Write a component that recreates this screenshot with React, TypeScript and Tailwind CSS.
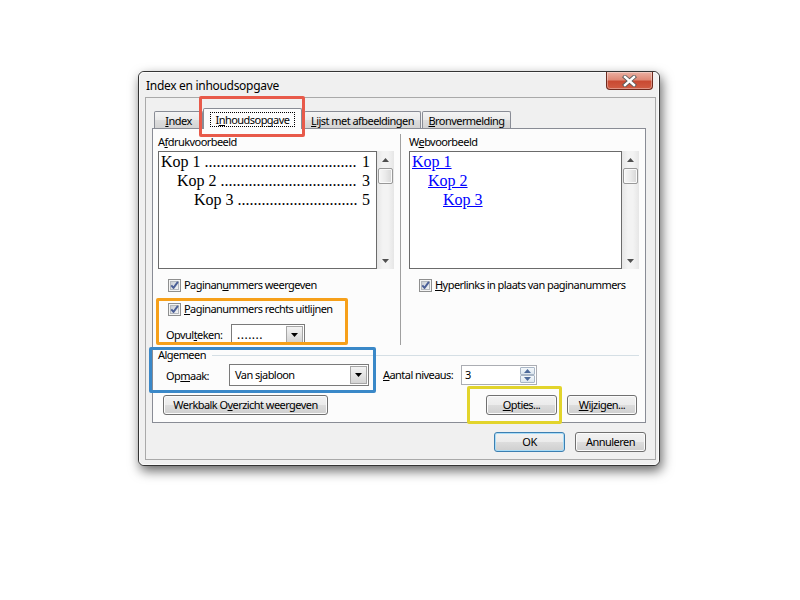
import React from "react";

const UI = "font-['Noto_Sans',sans-serif] text-[11px] tracking-[-0.55px] text-black";

function U({ children }: { children: React.ReactNode }) {
  return <span className="underline underline-offset-[1px] decoration-1">{children}</span>;
}

function Checkbox({ id }: { id: string }) {
  return (
    <svg width="13" height="13" viewBox="0 0 13 13" className="shrink-0">
      <defs>
        <linearGradient id={id} x1="0" y1="0" x2="1" y2="1">
          <stop offset="0" stopColor="#c6cbd2" />
          <stop offset="1" stopColor="#f8f8f8" />
        </linearGradient>
      </defs>
      <rect x="0.5" y="0.5" width="12" height="12" fill="#f4f4f4" stroke="#8e8f8f" />
      <rect x="2.5" y="2.5" width="8" height="8" fill={`url(#${id})`} stroke="#b4b8be" />
      <path d="M3.3 6.3 L5.5 8.9 L9.9 2.9" fill="none" stroke="#4b5f97" strokeWidth="1.9" strokeLinejoin="round" />
    </svg>
  );
}

function ScrollBar() {
  return (
    <div className="w-[17px] h-full flex flex-col items-center bg-[linear-gradient(to_right,#e6e6e6,#f3f3f3_35%,#f3f3f3_65%,#e6e6e6)]">
      <div className="h-[17px] w-full flex items-center justify-center">
        <svg width="7" height="4" viewBox="0 0 7 4">
          <path d="M3.5 0 L7 4 L0 4 Z" fill="#505050" />
        </svg>
      </div>
      <div className="w-[15px] h-[16px] rounded-[2px] border border-[#989898] bg-[linear-gradient(to_right,#f7f7f7,#eaeaea_50%,#d6d6d6)] shadow-[inset_0_0_0_1px_#fafafa]" />
      <div className="flex-1" />
      <div className="h-[17px] w-full flex items-center justify-center">
        <svg width="7" height="4" viewBox="0 0 7 4">
          <path d="M0 0 L7 0 L3.5 4 Z" fill="#505050" />
        </svg>
      </div>
    </div>
  );
}

function Button({
  children,
  w,
  def,
}: {
  children: React.ReactNode;
  w: string;
  def?: boolean;
}) {
  return (
    <div
      className={`${w} h-[20px] rounded-[3px] border flex items-center justify-center ${UI} bg-[linear-gradient(to_bottom,#f2f2f2_0%,#ebebeb_50%,#dddddd_50%,#cfcfcf_100%)] ${
        def
          ? "border-[#3c7fb1] shadow-[inset_0_0_0_1px_#a9dcf7]"
          : "border-[#707070] shadow-[inset_0_0_0_1px_#fbfbfb]"
      }`}
    >
      {children}
    </div>
  );
}

function DropArrow() {
  return (
    <div className="w-[17px] h-full border border-[#a6a6a6] bg-[linear-gradient(to_bottom,#f3f3f3,#e4e4e4_50%,#d4d4d4)] flex items-center justify-center">
      <svg width="7" height="4" viewBox="0 0 7 4">
        <path d="M0 0 L7 0 L3.5 4 Z" fill="#000" />
      </svg>
    </div>
  );
}

function PrintRow({ pad, label, num, n }: { pad: string; label: string; num: string; n: number }) {
  return (
    <div className={`flex justify-between ${pad} pr-[6px] whitespace-nowrap`}>
      <span>
        {label} {".".repeat(n)}
      </span>
      <span>{num}</span>
    </div>
  );
}

function Tab({
  children,
  cls,
  selected,
}: {
  children: React.ReactNode;
  cls: string;
  selected?: boolean;
}) {
  if (selected) {
    return (
      <div
        className={`${cls} h-[21px] -mb-px relative z-10 border border-b-0 border-[#898c95] rounded-t-[2px] bg-[#fcfcfc] flex items-center justify-center ${UI}`}
      >
        <span className="border border-dotted border-black px-[5px] leading-[13px]">{children}</span>
      </div>
    );
  }
  return (
    <div
      className={`${cls} h-[17px] border border-b-0 border-[#898c95] rounded-t-[2px] bg-[linear-gradient(to_bottom,#f4f4f4,#eaeaea_50%,#dedede_50%,#d3d3d3)] flex items-center justify-center pt-[2px] ${UI}`}
    >
      {children}
    </div>
  );
}

export default function App() {
  return (
    <div className="relative w-[800px] h-[600px] bg-white pl-[138px] pt-[71px] overflow-hidden">
      {/* Window */}
      <div className="w-[522px] h-[395px] rounded-[6px] border border-[#343434] bg-[#f0f0f0] shadow-[2px_5px_12px_rgba(0,0,0,0.6)] flex flex-col">
        <div className="flex-1 rounded-[5px] border border-[#fbfbfb] flex flex-col">
          {/* Title bar */}
          <div className="h-[24px] flex justify-between items-start">
            <div className="pl-[6px] pt-[5px] font-['Noto_Sans',sans-serif] text-[12px] tracking-[-0.3px] leading-[15px] text-black">
              Index en inhoudsopgave
            </div>
            <div className="mr-[5px] -mt-px w-[47px] h-[18px] rounded-b-[4px] border border-[#6f2a1e] border-t-0 bg-[linear-gradient(to_bottom,#eab0a2,#df8a77_45%,#c94a32_55%,#d15c43)] shadow-[inset_0_0_0_1px_rgba(255,255,255,0.35)] flex items-center justify-center">
              <svg width="15" height="12" viewBox="0 0 15 12">
                <path d="M3 2 L12 10 M12 2 L3 10" stroke="#5a5a5a" strokeWidth="4.2" strokeLinecap="square" />
                <path d="M3 2 L12 10 M12 2 L3 10" stroke="#ffffff" strokeWidth="2.4" strokeLinecap="square" />
              </svg>
            </div>
          </div>
          {/* Client */}
          <div className="ml-[5px] w-[511px] h-[363px] border border-[#a9a9a9] bg-[#f0f0f0] pl-[6px] pt-[10px] flex flex-col">
            <div className="w-[494px] flex flex-col">
              {/* Tabs */}
              <div className="h-[20px] flex items-end pl-[2px]">
                <Tab cls="w-[49px]">
                  <U>I</U>ndex
                </Tab>
                <Tab cls="w-[99px]" selected>
                  I<U>n</U>houdsopgave
                </Tab>
                <Tab cls="ml-[2px] w-[117px]">
                  <U>L</U>ijst met afbeeldingen
                </Tab>
                <Tab cls="ml-[1px] w-[89px]">
                  <U>B</U>ronvermelding
                </Tab>
              </div>
              {/* Panel */}
              <div className="w-[494px] h-[295px] border border-[#898c95] bg-[#fcfcfc] pl-[5px] pr-[6px] pt-[5px] flex flex-col">
                <div className="h-[211px] flex">
                  {/* Left column */}
                  <div className="w-[236px] flex flex-col">
                    <div className={`${UI} h-[15px] leading-[15px]`}>
                      A<U>f</U>drukvoorbeeld
                    </div>
                    <div className="mt-[2px] h-[118px] flex">
                      <div className="w-[219px] h-full border border-[#6b6b6b] bg-white font-['Liberation_Serif',serif] text-[16px] leading-[19px] text-black">
                        <PrintRow pad="pl-[2px]" label="Kop 1" num="1" n={38} />
                        <PrintRow pad="pl-[18px]" label="Kop 2" num="3" n={34} />
                        <PrintRow pad="pl-[35px]" label="Kop 3" num="5" n={30} />
                      </div>
                      <ScrollBar />
                    </div>
                    <div className={`mt-[9px] h-[15px] flex items-center gap-[3px] pl-[10px] ${UI}`}>
                      <Checkbox id="cb1" />
                      <span>
                        Paginan<U>u</U>mmers weergeven
                      </span>
                    </div>
                    <div className={`mt-[9px] h-[15px] flex items-center gap-[3px] pl-[10px] ${UI}`}>
                      <Checkbox id="cb2" />
                      <span>
                        <U>P</U>aginanummers rechts uitlijnen
                      </span>
                    </div>
                    <div className={`mt-[7px] h-[21px] flex items-center pl-[8px] ${UI}`}>
                      <span className="w-[65px] pt-[2px]">
                        Opvul<U>t</U>eken:
                      </span>
                      <div className="w-[74px] h-[21px] border border-[#7a7a7a] bg-white flex p-px">
                        <span className="flex-1 pl-[4px] leading-[17px] text-[12px] tracking-[0.5px]">.......</span>
                        <DropArrow />
                      </div>
                    </div>
                  </div>
                  {/* Divider */}
                  <div className="ml-[6px] w-px h-full bg-[#a0a0a0]" />
                  {/* Right column */}
                  <div className="ml-[8px] w-[230px] flex flex-col">
                    <div className={`${UI} h-[15px] leading-[15px]`}>
                      W<U>e</U>bvoorbeeld
                    </div>
                    <div className="mt-[2px] h-[118px] flex">
                      <div className="w-[213px] h-full border border-[#6b6b6b] bg-white font-['Liberation_Serif',serif] text-[16px] leading-[19px] text-[#0000ff]">
                        <div className="pl-[2px]">
                          <span className="underline">Kop 1</span>
                        </div>
                        <div className="pl-[18px]">
                          <span className="underline">Kop 2</span>
                        </div>
                        <div className="pl-[33px]">
                          <span className="underline">Kop 3</span>
                        </div>
                      </div>
                      <ScrollBar />
                    </div>
                    <div className={`mt-[9px] h-[15px] flex items-center gap-[3px] pl-[10px] ${UI}`}>
                      <Checkbox id="cb3" />
                      <span>
                        <U>H</U>yperlinks in plaats van paginanummers
                      </span>
                    </div>
                  </div>
                </div>
                {/* Algemeen */}
                <div className={`mt-[3px] h-[15px] flex items-center ${UI}`}>
                  <span>Algemeen</span>
                  <div className="ml-[6px] flex-1 h-px bg-[#d5dfe5]" />
                </div>
                <div className={`mt-[1px] h-[22px] flex items-start ${UI}`}>
                  <span className="pl-[8px] w-[71px] leading-[22px] pt-px">
                    Op<U>m</U>aak:
                  </span>
                  <div className="w-[140px] h-[22px] border border-[#7a7a7a] bg-white flex p-px">
                    <span className="flex-1 pl-[4px] leading-[18px]">Van sjabloon</span>
                    <DropArrow />
                  </div>
                  <span className="ml-[14px] w-[78px] leading-[21px]">
                    <U>A</U>antal niveaus:
                  </span>
                  <div className="mt-[1px] w-[76px] h-[20px] border border-[#abadb3] bg-white flex">
                    <span className="flex-1 pl-[3px] leading-[18px]">3</span>
                    <div className="w-[17px] h-full flex flex-col p-px">
                      <div className="flex-1 border border-[#a9b6c6] rounded-[1px] bg-[linear-gradient(to_bottom,#f4f8fb,#dce6ef)] flex items-center justify-center">
                        <svg width="7" height="4" viewBox="0 0 7 4">
                          <path d="M3.5 0 L7 4 L0 4 Z" fill="#4d6a9a" />
                        </svg>
                      </div>
                      <div className="flex-1 border border-[#a9b6c6] rounded-[1px] bg-[linear-gradient(to_bottom,#f4f8fb,#dce6ef)] flex items-center justify-center">
                        <svg width="7" height="4" viewBox="0 0 7 4">
                          <path d="M0 0 L7 0 L3.5 4 Z" fill="#4d6a9a" />
                        </svg>
                      </div>
                    </div>
                  </div>
                </div>
                <div className="mt-[9px] h-[20px] flex">
                  <div className="ml-[5px]">
                    <Button w="w-[165px]">
                      Werkbalk O<U>v</U>erzicht weergeven
                    </Button>
                  </div>
                  <div className="ml-auto mr-[2px] flex gap-[10px]">
                    <Button w="w-[71px]">
                      <U>O</U>pties...
                    </Button>
                    <Button w="w-[70px]">
                      <U>W</U>ijzigen...
                    </Button>
                  </div>
                </div>
              </div>
              {/* OK / Cancel */}
              <div className="mt-[9px] flex justify-end gap-[10px]">
                <Button w="w-[71px]" def>
                  OK
                </Button>
                <Button w="w-[71px]">Annuleren</Button>
              </div>
            </div>
          </div>
        </div>
      </div>

      {/* Annotation highlight boxes */}
      <div className="absolute left-[199px] top-[96px] w-[106px] h-[41px] border-[3px] border-[#e85a4a] rounded-[2px]" />
      <div className="absolute left-[156px] top-[298px] w-[192px] h-[47px] border-[3px] border-[#f6a01a] rounded-[2px]" />
      <div className="absolute left-[149px] top-[347px] w-[227px] h-[46px] border-[3px] border-[#3a88c8] rounded-[2px]" />
      <div className="absolute left-[467px] top-[386px] w-[95px] h-[38px] border-[3px] border-[#e2d42c] rounded-[2px]" />
    </div>
  );
}
